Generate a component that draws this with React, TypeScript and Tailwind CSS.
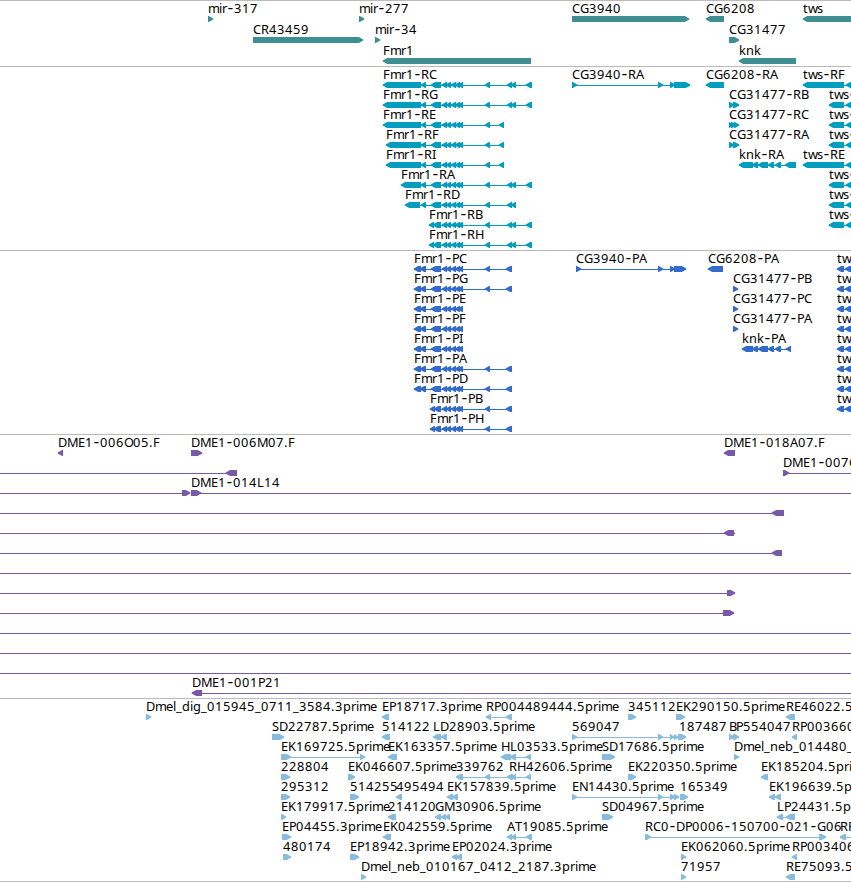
type Strand = '+' | '-';
type Exon = [number, number];

interface Feature {
  row: number;
  strand: Strand;
  exons: Exon[];
  label?: string;
  labelX?: number;
  // start / end of the connecting line when it runs past the exons
  from?: number;
  to?: number;
}

interface Track {
  id: string;
  color: string;
  height: number;
  pitch: number;
  features: Feature[];
}

const VIEW_WIDTH = 851;

// advance widths in px
const ADVANCE: Record<string, number> = {
  A: 8, B: 7, C: 8, D: 9, E: 7, F: 7, G: 9, H: 9, I: 3, K: 8, L: 7, M: 11, N: 9, O: 9, P: 7, R: 8, S: 7, T: 7,
  b: 8, d: 8, e: 7, g: 8, i: 3, k: 7, l: 3, m: 11, n: 8, p: 8, r: 5, s: 6, t: 5, w: 9,
  '-': 7, '.': 4, _: 6,
};

function glyphPositions(text: string, x: number) {
  let pos = x;
  return text
    .split('')
    .map((ch) => {
      // centre the dash in its cell
      const current = ch === '-' ? pos + 0.6 : pos;
      pos += ADVANCE[ch] ?? 8;
      return current;
    })
    .join(' ');
}

const f = (row: number, strand: Strand, exons: Exon[], label?: string, extra: Partial<Feature> = {}): Feature => ({
  row,
  strand,
  exons,
  label,
  ...extra,
});

const genes: Feature[] = [
  f(0, '+', [[208, 213]], 'mir-317'),
  f(0, '+', [[359, 364]], 'mir-277'),
  f(0, '+', [[572, 689]], 'CG3940'),
  f(0, '-', [[706, 724]], 'CG6208'),
  f(0, '-', [[803, 860]], 'tws'),
  f(1, '+', [[253, 363]], 'CR43459'),
  f(1, '+', [[375, 380]], 'mir-34'),
  f(1, '+', [[729, 739]], 'CG31477'),
  f(2, '-', [[383, 531]], 'Fmr1'),
  f(2, '-', [[739, 796]], 'knk'),
];

// small exons shared by every Fmr1 isoform
const core: Exon[] = [[442, 447], [446, 451], [451, 456], [455, 460], [458, 463]];
const rnaCore: Exon[] = [[421, 426], [431, 441], ...core, [485, 490]];
const rnaLong: Exon[] = [...rnaCore, [507, 512], [511, 516], [526, 532]];
const rnaShort: Exon[] = [...rnaCore, [499, 504]];
const rnaLate: Exon[] = [[429, 434], [433, 441], ...core, [485, 490], [507, 512], [511, 516], [526, 532]];
const twsTail: Exon[] = [[829, 844], [846, 852]];

const transcripts: Feature[] = [
  f(0, '-', [[383, 421], ...rnaLong], 'Fmr1-RC'),
  f(1, '-', [[383, 421], ...rnaLong], 'Fmr1-RG'),
  f(2, '-', [[383, 421], ...rnaShort], 'Fmr1-RE'),
  f(3, '-', [[386, 421], ...rnaShort], 'Fmr1-RF'),
  f(4, '-', [[386, 421], ...rnaShort], 'Fmr1-RI'),
  f(5, '-', [[401, 421], ...rnaLong], 'Fmr1-RA'),
  f(6, '-', [[405, 420], ...rnaCore, [507, 512], [511, 516]], 'Fmr1-RD'),
  f(7, '-', rnaLate, 'Fmr1-RB'),
  f(8, '-', rnaLate, 'Fmr1-RH'),
  f(0, '+', [[572, 577], [658, 663], [670, 675], [674, 690]], 'CG3940-RA'),
  f(0, '-', [[706, 724]], 'CG6208-RA'),
  f(1, '+', [[729, 734], [733, 739]], 'CG31477-RB'),
  f(2, '+', [[729, 733], [731, 736], [734, 739]], 'CG31477-RC'),
  f(3, '+', [[729, 734], [733, 739]], 'CG31477-RA'),
  f(4, '-', [[739, 753], [752, 758], [758, 768], [768, 774], [775, 781], [785, 796]], 'knk-RA'),
  f(0, '-', [[803, 844], [846, 852]], 'tws-RF'),
  f(1, '-', twsTail, 'tws-'),
  f(2, '-', twsTail, 'tws-'),
  f(3, '-', twsTail, 'tws-'),
  f(4, '-', [[803, 844], [846, 852]], 'tws-RE'),
  f(5, '-', twsTail, 'tws-'),
  f(6, '-', twsTail, 'tws-'),
  f(7, '-', twsTail, 'tws-'),
];

const protShort: Exon[] = [[414, 421], [420, 426], [431, 441], ...core];
const protLong: Exon[] = [...protShort, [485, 490], [506, 512]];
const protLate: Exon[] = [[430, 435], [434, 441], ...core, [485, 490], [506, 512]];
const twsProt: Exon[] = [[837, 844], [845, 852]];

const proteins: Feature[] = [
  f(0, '-', protLong, 'Fmr1-PC'),
  f(1, '-', protLong, 'Fmr1-PG'),
  f(2, '-', protShort, 'Fmr1-PE'),
  f(3, '-', protShort, 'Fmr1-PF'),
  f(4, '-', protShort, 'Fmr1-PI'),
  f(5, '-', protLong, 'Fmr1-PA'),
  f(6, '-', protLong, 'Fmr1-PD'),
  f(7, '-', protLate, 'Fmr1-PB'),
  f(8, '-', protLate, 'Fmr1-PH'),
  f(0, '+', [[576, 581], [658, 663], [670, 675], [674, 686]], 'CG3940-PA'),
  f(0, '-', [[708, 723]], 'CG6208-PA'),
  f(1, '+', [[733, 738]], 'CG31477-PB'),
  f(2, '+', [[733, 738]], 'CG31477-PC'),
  f(3, '+', [[733, 738]], 'CG31477-PA'),
  f(4, '-', [[742, 753], [752, 758], [758, 768], [768, 774], [775, 781], [786, 791]], 'knk-PA'),
  ...[0, 1, 2, 3, 4, 5, 6, 7].map((row) => f(row, '-', twsProt, 'tw')),
];

const clones: Feature[] = [
  f(0, '-', [[58, 63]], 'DME1-006O05.F'),
  f(0, '+', [[191, 202]], 'DME1-006M07.F'),
  f(0, '-', [[724, 735]], 'DME1-018A07.F'),
  f(1, '-', [[226, 237]], undefined, { from: 0 }),
  f(1, '+', [[783, 789]], 'DME1-007C', { to: VIEW_WIDTH }),
  f(2, '+', [[182, 190]], undefined, { from: 0 }),
  f(2, '+', [[191, 201]], 'DME1-014L14', { to: VIEW_WIDTH }),
  f(3, '-', [[772, 784]], undefined, { from: 0 }),
  f(4, '-', [[724, 734]], undefined, { from: 0, to: 735 }),
  f(5, '-', [[772, 782]], undefined, { from: 0 }),
  f(6, '-', [], undefined, { from: 0, to: VIEW_WIDTH }),
  f(7, '+', [[727, 735]], undefined, { from: 0 }),
  f(8, '+', [[723, 734]], undefined, { from: 0 }),
  f(9, '-', [], undefined, { from: 0, to: VIEW_WIDTH }),
  f(10, '-', [], undefined, { from: 0, to: VIEW_WIDTH }),
  f(11, '-', [], undefined, { from: 0, to: VIEW_WIDTH }),
  f(12, '-', [[192, 202]], 'DME1-001P21', { to: VIEW_WIDTH }),
];

const ests: Feature[] = [
  f(0, '+', [[146, 151]], 'Dmel_dig_015945_0711_3584.3prime'),
  f(0, '-', [[382, 389]], 'EP18717.3prime'),
  f(0, '-', [[486, 491], [506, 512]], 'RP004489444.5prime'),
  f(0, '+', [[628, 636]], '345112'),
  f(0, '+', [[676, 685]], 'EK290150.5prime'),
  f(0, '-', [[786, 795]], 'RE46022.5'),

  f(1, '+', [[272, 284]], 'SD22787.5prime'),
  f(1, '-', [[382, 390]], '514122'),
  f(1, '-', [[433, 441], [441, 447]], 'LD28903.5prime'),
  f(1, '+', [[572, 577], [658, 663], [670, 674], [674, 678]], '569047'),
  f(1, '+', [[678, 686]], '187487', { labelX: 679 }),
  f(1, '+', [[729, 734], [733, 739]], 'BP554047'),
  f(1, '-', [[792, 797]], 'RP003660'),

  f(2, '+', [[281, 291], [360, 365]], 'EK169725.5prime'),
  f(2, '-', [[388, 397]], 'EK163357.5prime'),
  f(2, '-', [[501, 511], [510, 516], [526, 531]], 'HL03533.5prime'),
  f(2, '+', [[602, 615]], 'SD17686.5prime'),
  f(2, '+', [[734, 739]], 'Dmel_neb_014480_'),

  f(3, '+', [[281, 290]], '228804'),
  f(3, '+', [[348, 355]], 'EK046607.5prime'),
  f(3, '-', [[456, 463], [485, 490], [507, 512]], '339762'),
  f(3, '-', [[509, 513], [511, 516], [526, 531]], 'RH42606.5prime'),
  f(3, '+', [[628, 636]], 'EK220350.5prime'),
  f(3, '-', [[761, 768]], 'EK185204.5pri'),

  f(4, '+', [[281, 290]], '295312'),
  f(4, '+', [[350, 359]], '514255'),
  f(4, '-', [[396, 402]], '495494'),
  f(4, '-', [[447, 453], [452, 458]], 'EK157839.5prime'),
  f(4, '+', [[572, 577], [658, 663], [670, 675], [674, 679]], 'EN14430.5prime'),
  f(4, '+', [[680, 688]], '165349'),
  f(4, '-', [[769, 775], [775, 781]], 'EK196639.5p'),

  f(5, '+', [[281, 286]], 'EK179917.5prime'),
  f(5, '-', [[388, 396]], '214120'),
  f(5, '-', [[435, 441], [441, 446], [445, 450]], 'GM30906.5prime'),
  f(5, '+', [[602, 613]], 'SD04967.5prime'),
  f(5, '-', [[777, 783], [786, 795]], 'LP24431.5p'),

  f(6, '+', [[282, 291]], 'EP04455.3prime'),
  f(6, '-', [[383, 391]], 'EK042559.5prime'),
  f(6, '-', [[507, 512], [511, 516], [526, 532]], 'AT19085.5prime'),
  f(6, '+', [[645, 651], [819, 826]], 'RC0-DP0006-150700-021-G06'),
  f(6, '-', [[840, 846]], 'RP', { to: VIEW_WIDTH }),

  f(7, '+', [[283, 291]], '480174'),
  f(7, '+', [[350, 359]], 'EP18942.3prime'),
  f(7, '-', [[452, 457], [456, 462]], 'EP02024.3prime'),
  f(7, '+', [[681, 686]], 'EK062060.5prime'),
  f(7, '-', [[792, 797]], 'RP003406'),

  f(8, '+', [[361, 366]], 'Dmel_neb_010167_0412_2187.3prime'),
  f(8, '+', [[681, 686]], '71957'),
  f(8, '-', [[786, 795]], 'RE75093.5'),
];

const tracks: Track[] = [
  { id: 'genes', color: '#3e8e94', height: 66, pitch: 21, features: genes },
  { id: 'transcripts', color: '#009dbe', height: 184, pitch: 20, features: transcripts },
  { id: 'proteins', color: '#336bcc', height: 184, pitch: 20, features: proteins },
  { id: 'clones', color: '#7759a7', height: 264, pitch: 20, features: clones },
  { id: 'ests', color: '#87bcde', height: 183, pitch: 20, features: ests },
];

// box with a slightly blunt arrow head on the strand side
function exonPoints([start, end]: Exon, strand: Strand, y: number) {
  const head = Math.min(4.5, end - start);
  const [tip, tail, dir] = strand === '-' ? [start - 0.3, end, 1] : [end + 0.3, start, -1];
  const neck = tip + dir * head;
  return `${tip},${y + 2.4} ${neck},${y} ${tail},${y} ${tail},${y + 6} ${neck},${y + 6} ${tip},${y + 3.6}`;
}

function Label({ text, x, y }: { text: string; x: number; y: number }) {
  return (
    <text x={glyphPositions(text, x)} y={y} fill="#000">
      {text.split(/(-)/).map((part, i) =>
        part === '-' ? (
          <tspan key={i} className="font-['DejaVu_Sans'] text-[16px]">
            -
          </tspan>
        ) : (
          part
        )
      )}
    </text>
  );
}

function FeatureGlyph({ feature, pitch, color }: { feature: Feature; pitch: number; color: string }) {
  const { row, strand, exons, label, labelX, from, to } = feature;
  const top = row * pitch;
  const start = from ?? exons[0][0];
  const end = to ?? exons[exons.length - 1][1];
  const hasLine = exons.length !== 1 || from !== undefined || to !== undefined;

  return (
    <g>
      {hasLine && <rect x={start} y={top + 18} width={end - start} height={1} fill={color} shapeRendering="crispEdges" />}
      {exons.map((exon, i) => (
        <polygon key={i} points={exonPoints(exon, strand, top + 15)} fill={color} />
      ))}
      {label && <Label text={label} x={labelX ?? exons[0][0]} y={top + 12} />}
    </g>
  );
}

export default function App() {
  return (
    <main className="flex h-[882px] w-[851px] flex-col overflow-hidden border-b border-[#bbbbbb] bg-white">
      {tracks.map((track) => (
        <section key={track.id} className="shrink-0 border-t border-[#bbbbbb]" style={{ height: track.height }}>
          <svg
            width={VIEW_WIDTH}
            height={track.height - 1}
            className="block font-['Noto_Sans','Open_Sans',sans-serif] text-[12.8px]"
          >
            {track.features.map((feature, i) => (
              <FeatureGlyph key={i} feature={feature} pitch={track.pitch} color={track.color} />
            ))}
          </svg>
        </section>
      ))}
    </main>
  );
}
